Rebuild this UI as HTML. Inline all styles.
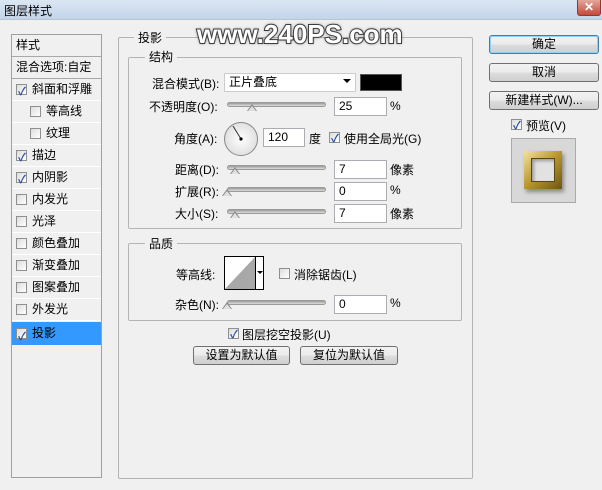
<!DOCTYPE html><html><head><meta charset="utf-8"><style>
*{box-sizing:border-box;margin:0;padding:0}
body{width:602px;height:490px;background:#f0f0f0;font:12px "Liberation Sans","Noto Sans CJK SC",sans-serif;color:#000;position:relative;overflow:hidden}
.a{position:absolute;white-space:nowrap}
.tb{left:0;top:0;width:602px;height:20px;background:linear-gradient(#dbe6f3,#c4d5ea);border-bottom:1px solid #b5c4d6}
.cb{width:11px;height:11px;border:1px solid #8e8f8f;background:linear-gradient(135deg,#dcdcdc,#fff)}
.ck:after{content:"✓";position:absolute;left:1px;top:-3px;font-size:11px;color:#2a4ea0;font-weight:bold}
.row{left:12px;width:89px;height:22px;border-bottom:1px solid #fff;line-height:21px}
.grp{border:1px solid #b4b4b4;border-radius:2px}
.lg{background:#f0f0f0;padding:0 4px;}
.sl{height:5px;border:1px solid #9a9a9a;border-radius:3px;background:linear-gradient(#9a9a9a,#dedede)}
.th{width:0;height:0;border-left:5px solid transparent;border-right:5px solid transparent;border-bottom:7px solid #888}
.th:after{content:"";position:absolute;left:-4px;top:2px;border-left:4px solid transparent;border-right:4px solid transparent;border-bottom:5px solid #e0e0e0}
.in{height:19px;background:#fff;border:1px solid #abadb3;padding-left:4px;line-height:17px}
.btn{border:1px solid #707070;border-radius:3px;background:linear-gradient(#f2f2f2 0%,#ebebeb 50%,#dddddd 51%,#cfcfcf 100%);text-align:center;line-height:16px;height:19px}
</style></head><body>
<div class="a tb"></div>
<div class="a" style="left:4px;top:2px;font-size:12px">图层样式</div>
<div class="a" style="left:577px;top:0;width:24px;height:16px;background:linear-gradient(#e3a79b,#c5483a);border:1px solid #8a3b30;border-top:none;border-radius:0 0 3px 3px;color:#fff;text-align:center;font-weight:bold;line-height:15px;font-size:12px">✕</div>

<div class="a" style="left:11px;top:34px;width:91px;height:444px;border:1px solid #a0a0a0;background:#f0f0f0"></div>
<div class="a row" style="top:35px;height:22px;padding-left:4px;border-bottom:1px solid #a8a8a8;line-height:20px">样式</div>
<div class="a row" style="top:57px;padding-left:4px;border-bottom:1px solid #a8a8a8">混合选项:自定</div>
<div class="a row" style="top:79px;padding-left:4px"><span class="a cb ck" style="left:4px;top:5px"></span><span style="margin-left:16px">斜面和浮雕</span></div>
<div class="a row" style="top:101px"><span class="a cb" style="left:18px;top:5px"></span><span style="margin-left:34px">等高线</span></div>
<div class="a row" style="top:123px"><span class="a cb" style="left:18px;top:5px"></span><span style="margin-left:34px">纹理</span></div>
<div class="a row" style="top:145px"><span class="a cb ck" style="left:4px;top:5px"></span><span style="margin-left:20px">描边</span></div>
<div class="a row" style="top:167px"><span class="a cb ck" style="left:4px;top:5px"></span><span style="margin-left:20px">内阴影</span></div>
<div class="a row" style="top:189px"><span class="a cb" style="left:4px;top:5px"></span><span style="margin-left:20px">内发光</span></div>
<div class="a row" style="top:211px"><span class="a cb" style="left:4px;top:5px"></span><span style="margin-left:20px">光泽</span></div>
<div class="a row" style="top:233px"><span class="a cb" style="left:4px;top:5px"></span><span style="margin-left:20px">颜色叠加</span></div>
<div class="a row" style="top:255px"><span class="a cb" style="left:4px;top:5px"></span><span style="margin-left:20px">渐变叠加</span></div>
<div class="a row" style="top:277px"><span class="a cb" style="left:4px;top:5px"></span><span style="margin-left:20px">图案叠加</span></div>
<div class="a row" style="top:299px"><span class="a cb" style="left:4px;top:5px"></span><span style="margin-left:20px">外发光</span></div>
<div class="a row" style="top:322px;height:23px;background:#3399ff;border:none;line-height:23px"><span class="a cb ck" style="left:4px;top:6px"></span><span style="margin-left:20px">投影</span></div>

<div class="a grp" style="left:118px;top:37px;width:355px;height:442px"></div>
<div class="a lg" style="left:134px;top:29px">投影</div>
<div class="a grp" style="left:128px;top:57px;width:334px;height:172px"></div>
<div class="a lg" style="left:145px;top:48px">结构</div>
<div class="a" style="left:197px;top:19px;font:bold 26px 'Liberation Sans',sans-serif;color:#fff;-webkit-text-stroke:2px #3a3a3a;paint-order:stroke fill;text-shadow:0 0 3px #444">www.240PS.com</div>

<div class="a" style="left:152px;top:75px">混合模式(B):</div>
<div class="a in" style="left:224px;top:73px;width:132px;height:19px;border-color:#ccc">正片叠底</div>
<div class="a" style="left:343px;top:79px;border-left:4px solid transparent;border-right:4px solid transparent;border-top:4px solid #000"></div>
<div class="a" style="left:360px;top:74px;width:42px;height:17px;background:#000;border:1px solid #555"></div>

<div class="a" style="left:149px;top:98px">不透明度(O):</div>
<div class="a sl" style="left:227px;top:102px;width:99px"></div><div class="a th" style="left:247px;top:104px"></div>
<div class="a in" style="left:334px;top:97px;width:53px">25</div><div class="a" style="left:390px;top:99px">%</div>

<div class="a" style="left:174px;top:130px">角度(A):</div>
<svg class="a" style="left:223px;top:121px" width="36" height="36"><defs><radialGradient id="g"><stop offset="0" stop-color="#fff"/><stop offset="1" stop-color="#e0e0e0"/></radialGradient></defs><circle cx="18" cy="18" r="16.5" fill="url(#g)" stroke="#888"/><line x1="18" y1="18" x2="10" y2="5" stroke="#333" stroke-width="1"/><circle cx="18" cy="18" r="1.6" fill="#000"/></svg>
<div class="a in" style="left:263px;top:128px;width:42px">120</div>
<div class="a" style="left:309px;top:130px">度</div>
<div class="a cb ck" style="left:329px;top:132px"></div>
<div class="a" style="left:344px;top:130px">使用全局光(G)</div>

<div class="a" style="left:175px;top:161px">距离(D):</div>
<div class="a sl" style="left:227px;top:165px;width:99px"></div><div class="a th" style="left:230px;top:167px"></div>
<div class="a in" style="left:334px;top:160px;width:53px">7</div><div class="a" style="left:390px;top:161px">像素</div>
<div class="a" style="left:175px;top:183px">扩展(R):</div>
<div class="a sl" style="left:227px;top:187px;width:99px"></div><div class="a th" style="left:222px;top:189px"></div>
<div class="a in" style="left:334px;top:182px;width:53px">0</div><div class="a" style="left:390px;top:183px">%</div>
<div class="a" style="left:175px;top:205px">大小(S):</div>
<div class="a sl" style="left:227px;top:209px;width:99px"></div><div class="a th" style="left:230px;top:211px"></div>
<div class="a in" style="left:334px;top:204px;width:53px">7</div><div class="a" style="left:390px;top:205px">像素</div>

<div class="a grp" style="left:128px;top:243px;width:334px;height:78px"></div>
<div class="a lg" style="left:145px;top:235px">品质</div>
<div class="a" style="left:176px;top:266px">等高线:</div>
<div class="a" style="left:224px;top:256px;width:40px;height:34px;border:1px solid #000;background:#fff"></div>
<svg class="a" style="left:225px;top:257px" width="30" height="32"><polygon points="0,32 30,0 30,32" fill="#a8a8a8"/></svg>
<div class="a" style="left:255px;top:257px;width:1px;height:32px;background:#000"></div>
<div class="a" style="left:257px;top:271px;border-left:3px solid transparent;border-right:3px solid transparent;border-top:3px solid #000"></div>
<div class="a cb" style="left:279px;top:268px"></div>
<div class="a" style="left:294px;top:266px">消除锯齿(L)</div>
<div class="a" style="left:175px;top:296px">杂色(N):</div>
<div class="a sl" style="left:227px;top:300px;width:99px"></div><div class="a th" style="left:222px;top:302px"></div>
<div class="a in" style="left:334px;top:295px;width:53px">0</div><div class="a" style="left:390px;top:296px">%</div>

<div class="a cb ck" style="left:228px;top:328px"></div>
<div class="a" style="left:242px;top:326px">图层挖空投影(U)</div>
<div class="a btn" style="left:193px;top:346px;width:97px">设置为默认值</div>
<div class="a btn" style="left:300px;top:346px;width:98px">复位为默认值</div>

<div class="a btn" style="left:489px;top:35px;width:110px;border-color:#3c7fb1;box-shadow:inset 0 0 0 1px #8ed3f7">确定</div>
<div class="a btn" style="left:489px;top:63px;width:110px">取消</div>
<div class="a btn" style="left:489px;top:91px;width:110px">新建样式(W)...</div>
<div class="a cb ck" style="left:511px;top:119px"></div>
<div class="a" style="left:526px;top:117px">预览(V)</div>
<div class="a" style="left:511px;top:138px;width:65px;height:65px;border:1px solid #aaa;background:#d8d8d8"></div>
<div class="a" style="left:524px;top:151px;width:38px;height:38px;background:linear-gradient(135deg,#f3e3a0,#b8962e 50%,#6e5511);box-shadow:2px 3px 4px #888"></div>
<div class="a" style="left:531px;top:158px;width:24px;height:24px;background:#e2e2e2;border:1px solid #5a4612;box-shadow:inset 2px 2px 3px #999"></div>
</body></html>
